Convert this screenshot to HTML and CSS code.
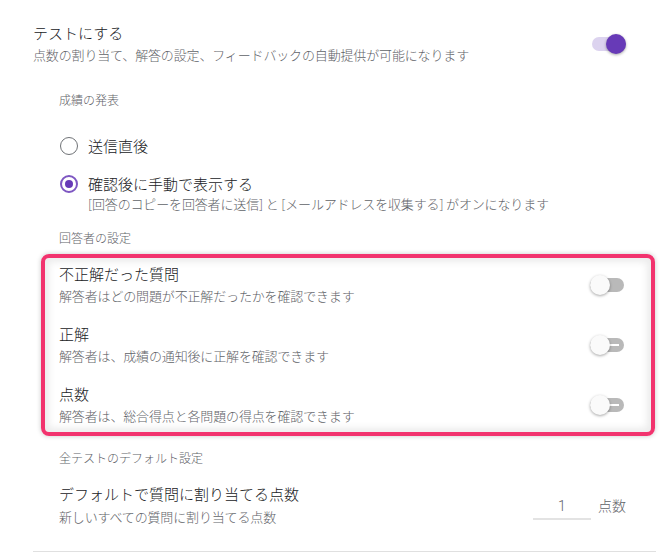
FILE: index.html
```html
<!DOCTYPE html>
<html lang="ja">
<head>
<meta charset="utf-8">
<title>テスト設定</title>
<link rel="stylesheet" href="styles.css">
</head>
<body>
<main class="page">
  <section class="row head">
    <div class="text">
      <div class="title">テストにする</div>
      <div class="desc">点数の割り当て、解答の設定、フィードバックの自動提供が可能になります</div>
    </div>
    <span class="switch on"><span class="track"></span><span class="thumb"></span></span>
  </section>

  <div class="group">
    <div class="label l1">成績の発表</div>
    <div class="radio-row r1">
      <span class="radio"></span>
      <div class="rtitle">送信直後</div>
    </div>
    <div class="radio-row r2">
      <span class="radio checked"></span>
      <div>
        <div class="rtitle">確認後に手動で表示する</div>
        <div class="desc tight">[回答のコピーを回答者に送信] と [メールアドレスを収集する] がオンになります</div>
      </div>
    </div>
    <div class="label l2">回答者の設定</div>
  </div>

  <div class="highlight">
    <div class="row item">
      <div class="text">
        <div class="title">不正解だった質問</div>
        <div class="desc">解答者はどの問題が不正解だったかを確認できます</div>
      </div>
      <span class="switch off"><span class="track"></span><span class="thumb"></span></span>
    </div>
    <div class="row item">
      <div class="text">
        <div class="title">正解</div>
        <div class="desc">解答者は、成績の通知後に正解を確認できます</div>
      </div>
      <span class="switch off lined"><span class="track"></span><span class="line"></span><span class="thumb"></span></span>
    </div>
    <div class="row item">
      <div class="text">
        <div class="title">点数</div>
        <div class="desc">解答者は、総合得点と各問題の得点を確認できます</div>
      </div>
      <span class="switch off lined"><span class="track"></span><span class="line"></span><span class="thumb"></span></span>
    </div>
  </div>

  <div class="group">
    <div class="label l3">全テストのデフォルト設定</div>
    <div class="row points">
      <div class="text">
        <div class="title">デフォルトで質問に割り当てる点数</div>
        <div class="desc sub2">新しいすべての質問に割り当てる点数</div>
      </div>
      <div class="pts">
        <span class="input">1</span>
        <span class="unit">点数</span>
      </div>
    </div>
  </div>

  <div class="divider"></div>
</main>
</body>
</html>
```

FILE: styles.css
```css
* { box-sizing: border-box; }
html, body { margin: 0; padding: 0; background: #fff; }
body {
  font-family: "Noto Sans CJK JP", "Noto Sans", sans-serif;
  font-weight: 300;
  color: #202124;
  width: 669px;
  height: 553px;
  overflow: hidden;
}
.page {
  padding: 23px 13px 0 33px;
}
.row {
  display: flex;
  align-items: center;
  justify-content: space-between;
}
.head { padding-right: 30px; }
.title {
  font-size: 15px;
  line-height: 20px;
  color: #202124;
}
.desc {
  font-size: 13px;
  line-height: 18px;
  margin-top: 3px;
  color: #5f6368;
  letter-spacing: -0.15px;
}
.desc.tight { margin-top: 1px; }
.desc.sub2 { margin-top: 4px; }

.group { padding-left: 26px; }
.label {
  font-size: 12px;
  line-height: 16px;
  color: #5f6368;
}
.l1 { margin-top: 28px; }
.l2 { margin-top: 17px; }
.l3 { margin-top: 14px; }

.radio-row {
  display: flex;
  align-items: flex-start;
  gap: 10px;
}
.r1 { margin-top: 28px; }
.r2 { margin-top: 18px; }
.rtitle {
  font-size: 15px;
  line-height: 20px;
  color: #202124;
}
.radio {
  width: 18px;
  height: 18px;
  margin-left: 1px;
  margin-top: 1px;
  border: 1.5px solid #6f7276;
  border-radius: 50%;
  flex: none;
  display: flex;
  align-items: center;
  justify-content: center;
}
.radio.checked { border: 2px solid #7e57c2; }
.radio.checked::after {
  content: "";
  width: 8px;
  height: 8px;
  border-radius: 50%;
  background: #673ab7;
}

.switch {
  position: relative;
  width: 36px;
  height: 20px;
  flex: none;
}
.switch .track {
  position: absolute;
  left: 0;
  top: 3px;
  width: 34px;
  height: 14px;
  border-radius: 7px;
  background: #b9b9b9;
}
.switch .thumb {
  position: absolute;
  top: 0;
  width: 20px;
  height: 20px;
  border-radius: 50%;
  background: #fafafa;
  box-shadow: 0 1px 3px rgba(0,0,0,0.35);
}
.switch.on .track { background: #dcd3ef; left: 2px; }
.switch.on .thumb { right: 0; background: #673ab7; }
.switch.off .thumb { left: 0; }
.switch .line {
  position: absolute;
  left: 16px;
  top: 9px;
  width: 13px;
  height: 2px;
  background: #fff;
}

.highlight {
  margin: 8px 1px 0 8px;
  border: 4px solid #f2336e;
  border-radius: 8px;
  padding: 6px 25px 7px 14px;
  box-shadow: 0 0 5px rgba(0,0,0,0.22), inset 0 0 7px 4px rgba(0,0,0,0.08);
}
.item + .item { margin-top: 19px; }

.points {
  margin-top: 18px;
  padding-right: 30px;
}
.pts {
  display: flex;
  align-items: center;
  gap: 7px;
}
.input {
  width: 58px;
  height: 26px;
  margin-top: 4px;
  border-bottom: 2px solid #e3e3e3;
  text-align: center;
  font-family: "Roboto", "Noto Sans", sans-serif;
  font-size: 14px;
  line-height: 24px;
  color: #5f6368;
}
.unit {
  font-size: 14px;
  line-height: 20px;
  color: #5f6368;
}
.divider {
  margin-top: 25px;
  height: 1px;
  background: #e0e0e0;
}
```
